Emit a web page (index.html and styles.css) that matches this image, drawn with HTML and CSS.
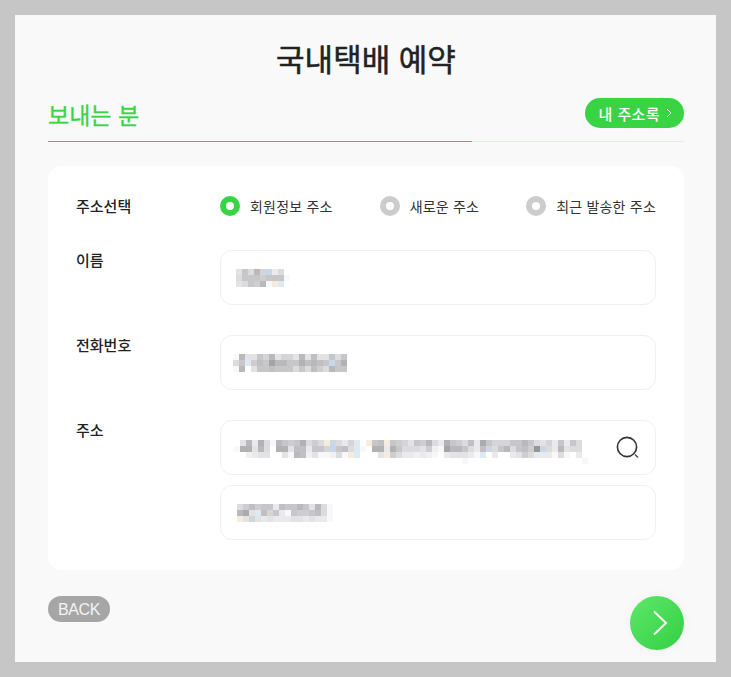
FILE: index.html
```html
<!DOCTYPE html>
<html lang="ko">
<head>
    <meta charset="UTF-8">
    <title>국내택배 예약</title>
    <link rel="stylesheet" href="styles.css">
</head>
<body>
    <div class="panel">
        <h1 class="title">국내택배 예약</h1>

        <div class="section-head">
            <h2 class="section-title">보내는 분</h2>
            <a class="book-btn">내 주소록
                <svg width="6" height="10" viewBox="0 0 6 10"><path d="M1 1l4 4-4 4" fill="none" stroke="#fff" stroke-width="1"/></svg>
            </a>
        </div>

        <div class="card">
            <div class="row row-radio">
                <div class="label">주소선택</div>
                <div class="radios">
                    <label class="radio on"><i></i>회원정보 주소</label>
                    <label class="radio"><i></i>새로운 주소</label>
                    <label class="radio"><i></i>최근 발송한 주소</label>
                </div>
            </div>
            <div class="row">
                <div class="label">이름</div>
                <div class="fields">
                    <div class="field"><canvas class="mosaic m-name" data-rows="b7a59xca|a77787 77e|ba785eyz"></canvas></div>
                </div>
            </div>
            <div class="row">
                <div class="label">전화번호</div>
                <div class="fields">
                    <div class="field"><canvas class="mosaic m-phone" data-rows="e5bb795b99b5b6bb7a7|a7z8672557746567x74|e5fb77677 7a7a68a577"></canvas></div>
                </div>
            </div>
            <div class="row">
                <div class="label">주소</div>
                <div class="fields">
                    <div class="field">
                        <canvas class="mosaic m-addr1" data-rows="fb5c4ae57874a8ayxac9zfy76y789b785ac478a6c379997757ab9c7c7a|e44b5af44b66c779x76azef44c47aaab8de2557ac6xa75a7680xac5baa|ffdcbbffbe56dbeedaeyzfffby8accdcdefcbbbcezfcffcb8accceaefc|ffffffffffffffffffffffffffffffffffffffefffffffffffffffffffe"></canvas>
                        <svg class="search" width="24" height="24" viewBox="0 0 24 24"><circle cx="11" cy="11" r="9.6" fill="none" stroke="#333" stroke-width="1.6"/><path d="M19 18.5l3 3" fill="none" stroke="#555" stroke-width="1.6"/></svg>
                    </div>
                    <div class="field"><canvas class="mosaic m-addr2" data-rows="a86877c67757b5ae|53bz697ce78876ae|yb9bcbcccbbcbcce"></canvas></div>
                </div>
            </div>
        </div>

        <div class="foot">
            <a class="back-btn">BACK</a>
            <a class="next-btn">
                <svg width="16" height="26" viewBox="0 0 16 26"><path d="M2 1.5l12 11.5L2 24.5" fill="none" stroke="#fff" stroke-width="2"/></svg>
            </a>
        </div>
    </div>
    <script src="mosaic.js"></script>
</body>
</html>
```

FILE: styles.css
```css
* {
    box-sizing: border-box;
}
body {
    margin: 0;
    padding: 15px;
    background-color: #c6c6c6;
    font-family: 'Noto Sans CJK KR', 'Noto Sans', sans-serif;
    color: #222;
}
.panel {
    width: 701px;
    height: 647px;
    padding: 0 32px 0 33px;
    background-color: #f9f9f9;
}
.title {
    margin: 0;
    padding-top: 20px;
    height: 81px;
    font-size: 31px;
    line-height: 46px;
    font-weight: 400;
    -webkit-text-stroke: 0.5px #222;
    text-align: center;
}
.section-head {
    display: flex;
    justify-content: space-between;
    align-items: flex-start;
    height: 46px;
    padding-top: 2px;
    background: linear-gradient(#3fcf4a, #3fcf4a) left bottom / 424px 1px no-repeat,
                linear-gradient(#dfeedd, #dfeedd) left bottom / 100% 1px no-repeat;
}
.section-title {
    margin: 0;
    font-size: 23px;
    line-height: 33px;
    font-weight: 400;
    -webkit-text-stroke: 0.3px #38d444;
    color: #38d444;
}
.book-btn {
    display: flex;
    align-items: center;
    gap: 6px;
    height: 30px;
    padding: 0 12px 0 14px;
    border-radius: 15px;
    background-color: #38d444;
    color: #fff;
    font-size: 15px;
    font-weight: 500;
    letter-spacing: 0.4px;
}
.card {
    margin-top: 24px;
    height: 404px;
    padding: 30px 28px;
    background-color: #fff;
    border-radius: 14px;
}
.row {
    display: flex;
    margin-bottom: 30px;
}
.row-radio {
    margin-bottom: 34px;
    height: 20px;
    align-items: center;
}
.label {
    width: 144px;
    flex-shrink: 0;
    font-size: 15px;
    line-height: 20px;
    font-weight: 500;
}
.radios {
    flex: 1;
    display: flex;
    justify-content: space-between;
}
.radio {
    display: flex;
    align-items: center;
    gap: 10px;
    font-size: 14px;
    line-height: 20px;
    letter-spacing: 0.2px;
    color: #333;
}
.radio i {
    width: 20px;
    height: 20px;
    border-radius: 50%;
    border: 6px solid #ccc;
    background-color: #fff;
}
.radio.on i {
    border-color: #38d444;
}
.fields {
    flex: 1;
    display: flex;
    flex-direction: column;
    gap: 10px;
}
.field {
    display: flex;
    align-items: center;
    justify-content: space-between;
    height: 55px;
    padding: 0 15px 0 13px;
    border: 1px solid #f0f0f0;
    border-radius: 12px;
    background-color: #fff;
}
.mosaic {
    display: block;
}
.m-name {
    margin-left: 2px;
}
.m-phone {
    margin-left: -1px;
}
.m-addr1 {
    margin-top: 9px;
}
.m-addr2 {
    margin-left: 3px;
}
.search {
    margin-top: 1px;
}
.foot {
    display: flex;
    justify-content: space-between;
    align-items: flex-start;
    margin-top: 26px;
}
.back-btn {
    height: 26px;
    padding: 0 10px;
    border-radius: 13px;
    background-color: #a6a6a6;
    color: #f4f4f4;
    font-family: 'Liberation Sans', sans-serif;
    font-size: 16px;
    line-height: 27px;
    letter-spacing: -0.4px;
}
.next-btn {
    display: flex;
    align-items: center;
    justify-content: center;
    width: 54px;
    height: 54px;
    padding-left: 5px;
    border-radius: 50%;
    background: linear-gradient(135deg, #5fe76a, #33d043);
    box-shadow: 0 0 12px rgba(0, 0, 0, 0.04);
}
```

FILE: mosaic.js
```js
// 흐림 처리된 개인정보 영역 - 6px 모자이크
var CELL = 6;
var TINTS = { x: '#c8d8e8', y: '#f6ecdc', z: '#dceaf4' };

// 글자 하나가 회색 단계 하나 (0=진함, f=흰색)
function color(c) {
    if (TINTS[c]) return TINTS[c];
    var g = 150 + parseInt(c, 16) * 7;
    return 'rgb(' + g + ',' + g + ',' + (g + 2 > 255 ? 255 : g + 2) + ')';
}

document.querySelectorAll('.mosaic').forEach(function(canvas) {
    var rows = canvas.dataset.rows.replace(/ /g, '').split('|');
    var cols = Math.max.apply(null, rows.map(function(r) { return r.length; }));
    canvas.width = cols * CELL;
    canvas.height = rows.length * CELL;
    var ctx = canvas.getContext('2d');
    rows.forEach(function(row, y) {
        for (var x = 0; x < row.length; x++) {
            ctx.fillStyle = color(row[x]);
            ctx.fillRect(x * CELL, y * CELL, CELL, CELL);
        }
    });
});
```
